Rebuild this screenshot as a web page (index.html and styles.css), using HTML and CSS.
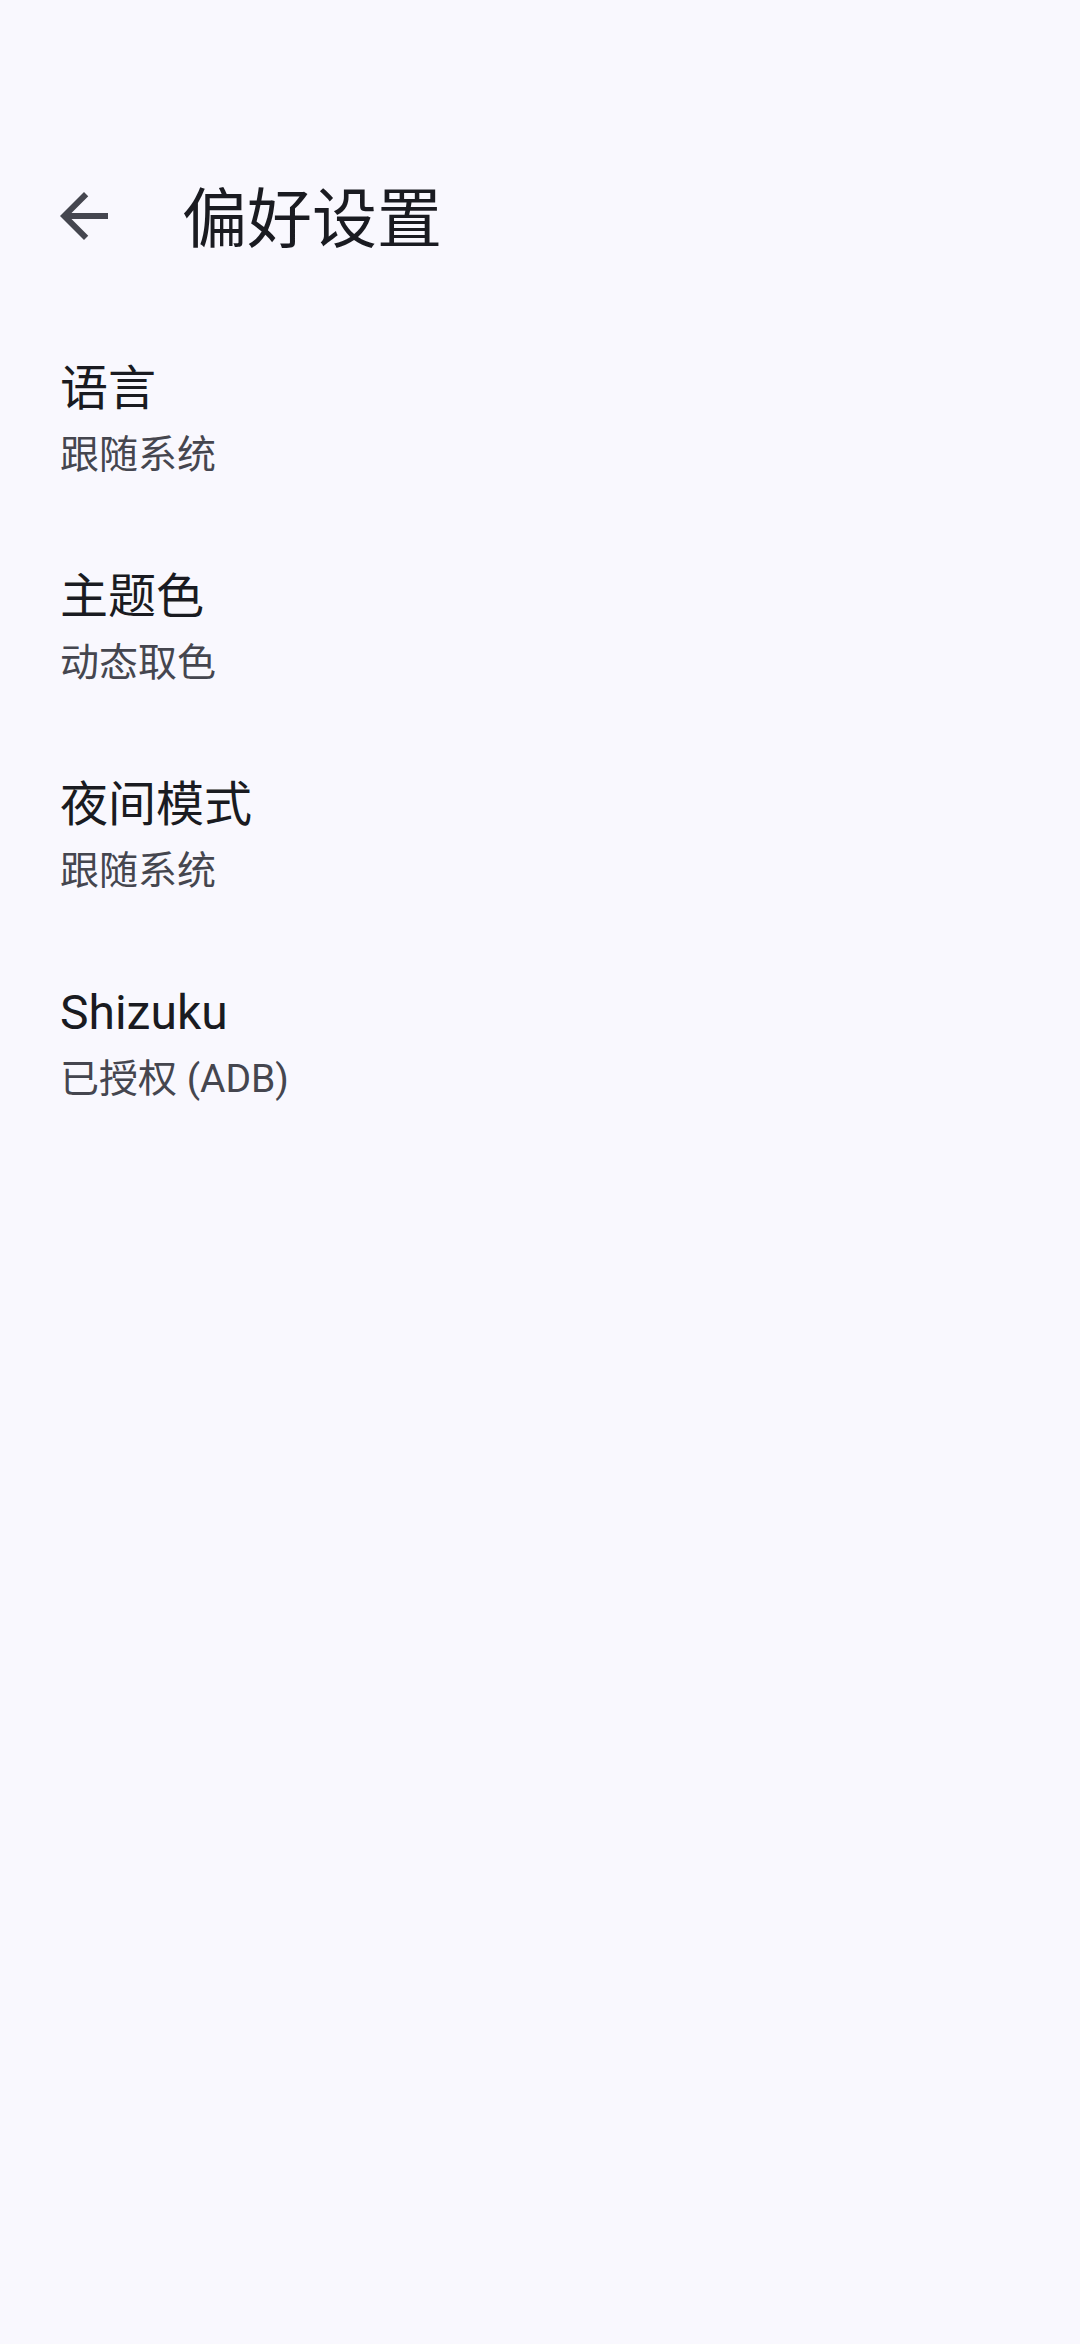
FILE: index.html
```html
<!DOCTYPE html>
<html lang="zh-CN">
<head>
<meta charset="utf-8">
<title>偏好设置</title>
<link rel="stylesheet" href="styles.css">
</head>
<body>
<div class="screen">
  <header class="topbar">
    <div class="topbar-row">
      <span class="back">
        <svg viewBox="0 0 24 24" width="72" height="72" aria-hidden="true"><path d="M20 11H7.83l5.59-5.59L12 4l-8 8 8 8 1.41-1.41L7.83 13H20v-2z"/></svg>
      </span>
      <h1 class="title">偏好设置</h1>
    </div>
  </header>
  <ul class="list">
    <li class="item"><div class="item-title">语言</div><div class="item-sub">跟随系统</div></li>
    <li class="item"><div class="item-title">主题色</div><div class="item-sub">动态取色</div></li>
    <li class="item"><div class="item-title">夜间模式</div><div class="item-sub">跟随系统</div></li>
    <li class="item"><div class="item-title">Shizuku</div><div class="item-sub">已授权 (ADB)</div></li>
  </ul>
</div>
</body>
</html>
```

FILE: styles.css
```css
html, body {
  margin: 0;
  padding: 0;
  background: #F9F8FE;
}
body {
  font-family: Roboto, "Noto Sans CJK SC", sans-serif;
  color: #1A1B21;
}
.screen {
  width: 1080px;
  min-height: 2344px;
  background: #F9F8FE;
}
.topbar {
  padding-top: 122px;
}
.topbar-row {
  height: 192px;
  display: flex;
  align-items: center;
}
.back {
  display: flex;
  width: 72px;
  height: 72px;
  margin-left: 48px;
  margin-bottom: 4px;
  fill: #45464F;
}
.title {
  margin: 4px 0 0 62px;
  font-size: 65px;
  font-weight: 400;
  line-height: 80px;
  color: #1A1B21;
}
.list {
  list-style: none;
  margin: 0;
  padding: 0;
}
.item {
  padding: 37px 60px 38px;
}
.item-title {
  font-size: 48px;
  line-height: 75px;
  color: #1A1B21;
}
.item-sub {
  font-size: 39px;
  line-height: 58px;
  color: #45464F;
}
```
